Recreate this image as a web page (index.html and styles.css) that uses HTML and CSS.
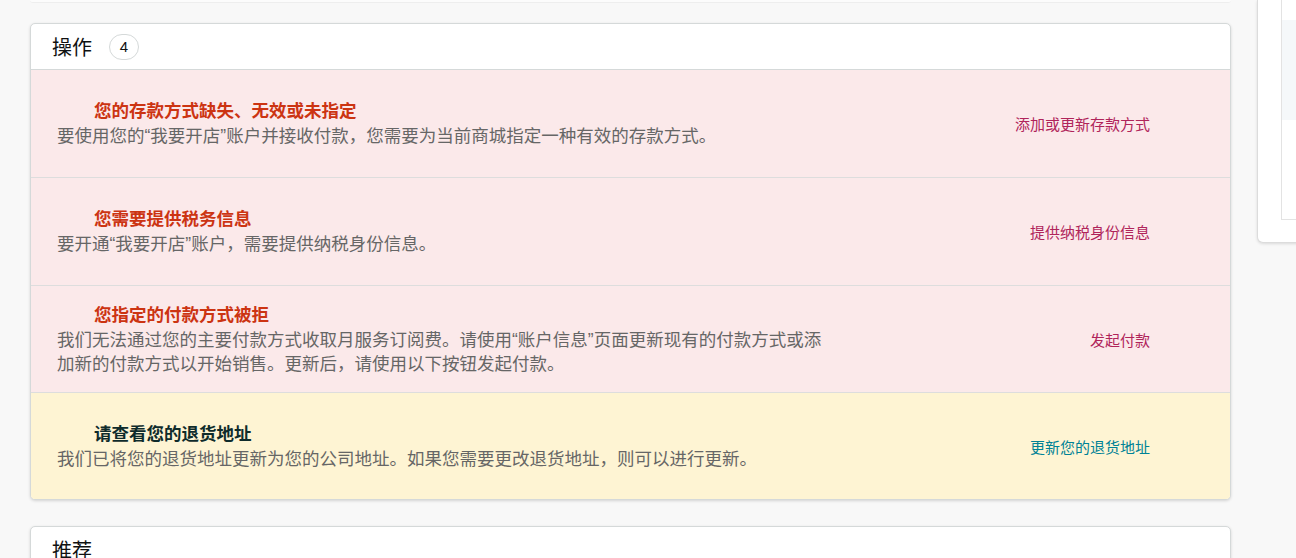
FILE: index.html
```html
<!DOCTYPE html>
<html lang="zh-CN">
<head>
  <meta charset="UTF-8">
  <title>操作</title>
  <link rel="stylesheet" href="styles.css">
</head>
<body>
  <div class="page">
    <div class="main">
      <div class="prev-card"></div>

      <div class="card">
        <div class="card-header">
          <span class="card-title">操作</span>
          <span class="badge">4</span>
        </div>

        <div class="action error">
          <div class="action-text">
            <div class="action-title">您的存款方式缺失、无效或未指定</div>
            <div class="action-desc">要使用您的“我要开店”账户并接收付款，您需要为当前商城指定一种有效的存款方式。</div>
          </div>
          <a class="action-link" href="#">添加或更新存款方式</a>
        </div>

        <div class="action error">
          <div class="action-text">
            <div class="action-title">您需要提供税务信息</div>
            <div class="action-desc">要开通“我要开店”账户，需要提供纳税身份信息。</div>
          </div>
          <a class="action-link" href="#">提供纳税身份信息</a>
        </div>

        <div class="action error short">
          <div class="action-text">
            <div class="action-title">您指定的付款方式被拒</div>
            <div class="action-desc">我们无法通过您的主要付款方式收取月服务订阅费。请使用“账户信息”页面更新现有的付款方式或添加新的付款方式以开始销售。更新后，请使用以下按钮发起付款。</div>
          </div>
          <a class="action-link" href="#">发起付款</a>
        </div>

        <div class="action warning">
          <div class="action-text">
            <div class="action-title">请查看您的退货地址</div>
            <div class="action-desc">我们已将您的退货地址更新为您的公司地址。如果您需要更改退货地址，则可以进行更新。</div>
          </div>
          <a class="action-link" href="#">更新您的退货地址</a>
        </div>
      </div>

      <div class="card">
        <div class="card-header">
          <span class="card-title">推荐</span>
        </div>
      </div>
    </div>

    <div class="sidebar">
      <div class="side-box">
        <div class="side-head"></div>
      </div>
    </div>
  </div>
</body>
</html>
```

FILE: styles.css
```css
* {
  box-sizing: border-box;
}
body {
  margin: 0;
  background: #f8f8f8;
  font-family: 'Liberation Sans', 'Noto Sans CJK SC', sans-serif;
  overflow: hidden;
}
.page {
  display: flex;
  align-items: flex-start;
  gap: 26px;
  padding-left: 30px;
}
.main {
  width: 1201px;
  flex-shrink: 0;
}
.prev-card {
  height: 3px;
  background: #fcfcfc;
  border-bottom: 1px solid #eee;
  border-radius: 0 0 4px 4px;
}
.card {
  margin-top: 20px;
  background: #fff;
  border: 1px solid #d5d9d9;
  border-radius: 5px;
  box-shadow: 0 1px 3px rgba(0,0,0,0.15);
  overflow: hidden;
}
.card + .card {
  margin-top: 26px;
}
.card-header {
  height: 46px;
  display: flex;
  align-items: center;
  gap: 17px;
  padding-left: 21px;
  border-bottom: 1px solid #d5d9d9;
}
.card-title {
  font-size: 20px;
  color: #0f1111;
}
.badge {
  width: 30px;
  height: 26px;
  border: 1px solid #d5d9d9;
  border-radius: 13px;
  display: flex;
  align-items: center;
  justify-content: center;
  font-size: 15px;
  color: #0f1111;
}
.action {
  height: 108px;
  display: flex;
  align-items: center;
  justify-content: space-between;
  padding: 0 80px 0 26px;
  border-bottom: 1px solid #ddd;
}
.action.short {
  height: 107px;
}
.action:last-child {
  height: 106px;
  border-bottom: none;
}
.error {
  background: #fbe9ea;
}
.warning {
  background: #fef4d3;
}
.action-text {
  width: 780px;
}
.action-title {
  margin-left: 37px;
  font-size: 17.5px;
  line-height: 25px;
  font-weight: bold;
  color: #cc3412;
}
.warning .action-title {
  color: #0f2b2b;
}
.action-desc {
  font-size: 17.5px;
  line-height: 24px;
  color: #666;
}
.action-link {
  font-size: 15px;
  color: #b0245a;
  text-decoration: none;
}
.warning .action-link {
  color: #008296;
}
.sidebar {
  width: 300px;
  flex-shrink: 0;
  height: 243px;
  background: #fff;
  border: 1px solid #dcdcdc;
  border-top: none;
  border-radius: 0 0 6px 6px;
  box-shadow: 0 1px 3px rgba(0,0,0,0.12);
  padding: 0 0 22px 23px;
}
.side-box {
  height: 100%;
  border-left: 1px solid #e3e3e3;
  border-bottom: 1px solid #e3e3e3;
  padding-top: 20px;
}
.side-head {
  height: 100px;
  background: #f5f8fa;
}
```
